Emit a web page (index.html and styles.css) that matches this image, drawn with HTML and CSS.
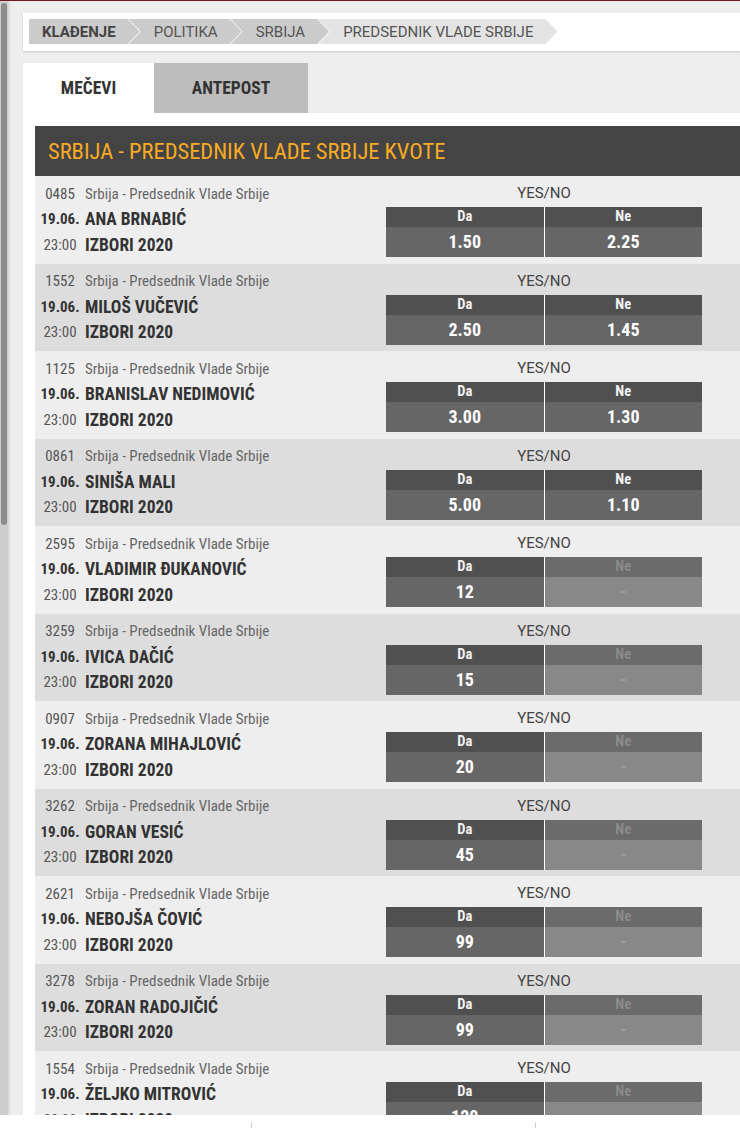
FILE: index.html
```html
<!DOCTYPE html>
<html lang="sr">
<head>
<meta charset="utf-8">
<title>Srbija - Predsednik Vlade Srbije kvote</title>
<link rel="stylesheet" href="styles.css">
</head>
<body>
<div class="topline"></div>
<div class="viewport">
  <div class="vscroll"><div class="thumb"></div></div>
  <div class="main">
    <div class="crumbs">
      <div class="crumb first"><span class="ct strong">KLAĐENJE</span></div>
      <div class="crumb"><span class="ct">POLITIKA</span></div>
      <div class="crumb"><span class="ct">SRBIJA</span></div>
      <div class="crumb last"><span class="ct">PREDSEDNIK VLADE SRBIJE</span></div>
    </div>
    <div class="tabs">
      <div class="tab active"><span class="tt">MEČEVI</span></div>
      <div class="tab"><span class="tt">ANTEPOST</span></div>
    </div>
    <div class="panel">
      <div class="head"><span class="ht">SRBIJA - PREDSEDNIK VLADE SRBIJE KVOTE</span></div>

      <div class="row">
        <div class="event">
          <div class="line l1"><span class="lc">0485</span><span class="lt league">Srbija - Predsednik Vlade Srbije</span></div>
          <div class="line l2"><span class="lc date">19.06.</span><span class="lt name">ANA BRNABIĆ</span></div>
          <div class="line l3"><span class="lc">23:00</span><span class="lt name">IZBORI 2020</span></div>
        </div>
        <div class="market">
          <div class="mtitle">YES/NO</div>
          <div class="odds">
            <div class="oc"><div class="oh">Da</div><div class="ov">1.50</div></div>
            <div class="oc"><div class="oh">Ne</div><div class="ov">2.25</div></div>
          </div>
        </div>
      </div>

      <div class="row alt">
        <div class="event">
          <div class="line l1"><span class="lc">1552</span><span class="lt league">Srbija - Predsednik Vlade Srbije</span></div>
          <div class="line l2"><span class="lc date">19.06.</span><span class="lt name">MILOŠ VUČEVIĆ</span></div>
          <div class="line l3"><span class="lc">23:00</span><span class="lt name">IZBORI 2020</span></div>
        </div>
        <div class="market">
          <div class="mtitle">YES/NO</div>
          <div class="odds">
            <div class="oc"><div class="oh">Da</div><div class="ov">2.50</div></div>
            <div class="oc"><div class="oh">Ne</div><div class="ov">1.45</div></div>
          </div>
        </div>
      </div>

      <div class="row">
        <div class="event">
          <div class="line l1"><span class="lc">1125</span><span class="lt league">Srbija - Predsednik Vlade Srbije</span></div>
          <div class="line l2"><span class="lc date">19.06.</span><span class="lt name">BRANISLAV NEDIMOVIĆ</span></div>
          <div class="line l3"><span class="lc">23:00</span><span class="lt name">IZBORI 2020</span></div>
        </div>
        <div class="market">
          <div class="mtitle">YES/NO</div>
          <div class="odds">
            <div class="oc"><div class="oh">Da</div><div class="ov">3.00</div></div>
            <div class="oc"><div class="oh">Ne</div><div class="ov">1.30</div></div>
          </div>
        </div>
      </div>

      <div class="row alt">
        <div class="event">
          <div class="line l1"><span class="lc">0861</span><span class="lt league">Srbija - Predsednik Vlade Srbije</span></div>
          <div class="line l2"><span class="lc date">19.06.</span><span class="lt name">SINIŠA MALI</span></div>
          <div class="line l3"><span class="lc">23:00</span><span class="lt name">IZBORI 2020</span></div>
        </div>
        <div class="market">
          <div class="mtitle">YES/NO</div>
          <div class="odds">
            <div class="oc"><div class="oh">Da</div><div class="ov">5.00</div></div>
            <div class="oc"><div class="oh">Ne</div><div class="ov">1.10</div></div>
          </div>
        </div>
      </div>

      <div class="row">
        <div class="event">
          <div class="line l1"><span class="lc">2595</span><span class="lt league">Srbija - Predsednik Vlade Srbije</span></div>
          <div class="line l2"><span class="lc date">19.06.</span><span class="lt name">VLADIMIR ĐUKANOVIĆ</span></div>
          <div class="line l3"><span class="lc">23:00</span><span class="lt name">IZBORI 2020</span></div>
        </div>
        <div class="market">
          <div class="mtitle">YES/NO</div>
          <div class="odds">
            <div class="oc"><div class="oh">Da</div><div class="ov">12</div></div>
            <div class="oc off"><div class="oh">Ne</div><div class="ov">-</div></div>
          </div>
        </div>
      </div>

      <div class="row alt">
        <div class="event">
          <div class="line l1"><span class="lc">3259</span><span class="lt league">Srbija - Predsednik Vlade Srbije</span></div>
          <div class="line l2"><span class="lc date">19.06.</span><span class="lt name">IVICA DAČIĆ</span></div>
          <div class="line l3"><span class="lc">23:00</span><span class="lt name">IZBORI 2020</span></div>
        </div>
        <div class="market">
          <div class="mtitle">YES/NO</div>
          <div class="odds">
            <div class="oc"><div class="oh">Da</div><div class="ov">15</div></div>
            <div class="oc off"><div class="oh">Ne</div><div class="ov">-</div></div>
          </div>
        </div>
      </div>

      <div class="row">
        <div class="event">
          <div class="line l1"><span class="lc">0907</span><span class="lt league">Srbija - Predsednik Vlade Srbije</span></div>
          <div class="line l2"><span class="lc date">19.06.</span><span class="lt name">ZORANA MIHAJLOVIĆ</span></div>
          <div class="line l3"><span class="lc">23:00</span><span class="lt name">IZBORI 2020</span></div>
        </div>
        <div class="market">
          <div class="mtitle">YES/NO</div>
          <div class="odds">
            <div class="oc"><div class="oh">Da</div><div class="ov">20</div></div>
            <div class="oc off"><div class="oh">Ne</div><div class="ov">-</div></div>
          </div>
        </div>
      </div>

      <div class="row alt">
        <div class="event">
          <div class="line l1"><span class="lc">3262</span><span class="lt league">Srbija - Predsednik Vlade Srbije</span></div>
          <div class="line l2"><span class="lc date">19.06.</span><span class="lt name">GORAN VESIĆ</span></div>
          <div class="line l3"><span class="lc">23:00</span><span class="lt name">IZBORI 2020</span></div>
        </div>
        <div class="market">
          <div class="mtitle">YES/NO</div>
          <div class="odds">
            <div class="oc"><div class="oh">Da</div><div class="ov">45</div></div>
            <div class="oc off"><div class="oh">Ne</div><div class="ov">-</div></div>
          </div>
        </div>
      </div>

      <div class="row">
        <div class="event">
          <div class="line l1"><span class="lc">2621</span><span class="lt league">Srbija - Predsednik Vlade Srbije</span></div>
          <div class="line l2"><span class="lc date">19.06.</span><span class="lt name">NEBOJŠA ČOVIĆ</span></div>
          <div class="line l3"><span class="lc">23:00</span><span class="lt name">IZBORI 2020</span></div>
        </div>
        <div class="market">
          <div class="mtitle">YES/NO</div>
          <div class="odds">
            <div class="oc"><div class="oh">Da</div><div class="ov">99</div></div>
            <div class="oc off"><div class="oh">Ne</div><div class="ov">-</div></div>
          </div>
        </div>
      </div>

      <div class="row alt">
        <div class="event">
          <div class="line l1"><span class="lc">3278</span><span class="lt league">Srbija - Predsednik Vlade Srbije</span></div>
          <div class="line l2"><span class="lc date">19.06.</span><span class="lt name">ZORAN RADOJIČIĆ</span></div>
          <div class="line l3"><span class="lc">23:00</span><span class="lt name">IZBORI 2020</span></div>
        </div>
        <div class="market">
          <div class="mtitle">YES/NO</div>
          <div class="odds">
            <div class="oc"><div class="oh">Da</div><div class="ov">99</div></div>
            <div class="oc off"><div class="oh">Ne</div><div class="ov">-</div></div>
          </div>
        </div>
      </div>

      <div class="row">
        <div class="event">
          <div class="line l1"><span class="lc">1554</span><span class="lt league">Srbija - Predsednik Vlade Srbije</span></div>
          <div class="line l2"><span class="lc date">19.06.</span><span class="lt name">ŽELJKO MITROVIĆ</span></div>
          <div class="line l3"><span class="lc">23:00</span><span class="lt name">IZBORI 2020</span></div>
        </div>
        <div class="market">
          <div class="mtitle">YES/NO</div>
          <div class="odds">
            <div class="oc"><div class="oh">Da</div><div class="ov">120</div></div>
            <div class="oc off"><div class="oh">Ne</div><div class="ov">-</div></div>
          </div>
        </div>
      </div>
    </div>
  </div>
</div>
<div class="footer">
  <div class="fseg s1"></div>
  <div class="fseg s2"></div>
  <div class="fseg s3"></div>
</div>
</body>
</html>
```

FILE: styles.css
```css
* { box-sizing: border-box; }
html, body { margin: 0; padding: 0; }
body {
  background: #eeeeee;
  font-family: "Roboto Condensed", Roboto, "Liberation Sans", sans-serif;
  color: #333;
  width: 740px;
  height: 1128px;
  overflow: hidden;
  display: flex;
  flex-direction: column;
}
.topline { height: 1px; background: #6d1a1a; flex: none; }
.viewport { height: 1114px; display: flex; overflow: hidden; flex: none; }
.vscroll {
  width: 10px; flex: none;
  background: #cdcdcd;
  border-right: 2px solid #dcdcdc;
  padding: 2px 1px 0 1px;
}
.thumb { height: 522px; background: #8c8c8c; border-radius: 4px; }
.main { flex: 1; padding-left: 13px; min-width: 0; }

/* breadcrumb */
.crumbs {
  margin-top: 12px;
  background: #fff;
  height: 38px;
  padding: 6px 0 0 6px;
  display: flex;
  box-shadow: 0 1px 2px rgba(0,0,0,0.15);
}
.crumb {
  height: 25px;
  background: #cbcbcb;
  display: flex;
  align-items: center;
  padding: 0 24px 0 25px;
  margin-left: -11px;
  clip-path: polygon(0 0, calc(100% - 12px) 0, 100% 50%, calc(100% - 12px) 100%, 0 100%, 12px 50%);
}
.crumb.first {
  margin-left: 0;
  padding-left: 13px;
  clip-path: polygon(0 0, calc(100% - 12px) 0, 100% 50%, calc(100% - 12px) 100%, 0 100%);
}
.crumb.last { background: #e3e3e3; }
.ct { font-family: Roboto, "Liberation Sans", sans-serif; font-size: 15px; color: #555; }
.ct.strong { font-weight: 700; color: #444; }

/* tabs */
.tabs { margin-top: 12px; display: flex; height: 50px; }
.tab {
  width: 154px;
  background: #bdbdbd;
  display: flex; align-items: center; justify-content: center;
}
.tab.active { width: 131px; background: #fff; }
.tt { font-size: 17.5px; font-weight: 700; color: #333; }

/* panel */
.panel { background: #fff; padding: 13px 0 0 12px; }
.head {
  height: 50px;
  background: #444444;
  display: flex; align-items: center;
  padding-left: 13px;
}
.ht { font-size: 22.5px; color: #f9ab23; }

.row { height: 87.5px; background: #eeeeee; display: flex; }
.row.alt { background: #dddddd; }
.event { width: 351px; padding-top: 5px; flex: none; }
.line { display: flex; align-items: center; }
.l1 { height: 25px; }
.l2 { height: 26px; }
.l3 { height: 25px; }
.lc { width: 50px; text-align: center; font-size: 15px; color: #555; flex: none; }
.lc.date { font-weight: 700; font-size: 15px; color: #333; }
.lt { white-space: nowrap; }
.league { font-size: 15px; color: #666; }
.name { font-size: 17.5px; font-weight: 700; color: #333; }

.market { width: 316px; flex: none; padding-top: 5px; }
.mtitle {
  height: 26px; line-height: 24px; text-align: center;
  font-family: Roboto, "Liberation Sans", sans-serif;
  font-size: 15px; color: #444;
}
.odds { display: flex; gap: 1px; background: #fff; }
.oc { flex: 1; text-align: center; }
.oh { height: 20px; line-height: 20px; background: #505050; color: #f2f2f2; font-size: 14.5px; font-weight: 700; }
.ov { height: 30px; line-height: 30px; background: #666666; color: #fff; font-size: 18px; font-weight: 700; }
.oc.off .oh { background: #6b6b6b; color: #8a8a8a; }
.oc.off .ov { background: #888888; color: #9d9d9d; }

.footer { height: 13px; background: #fff; display: flex; flex: none; }
.fseg { height: 13px; }
.s1 { width: 251px; }
.s2 { width: 284px; border-left: 1px solid #d0d0d0; clip-path: inset(7px 0 0 0); }
.s3 { flex: 1; border-left: 1px solid #d0d0d0; clip-path: inset(7px 0 0 0); }
```
